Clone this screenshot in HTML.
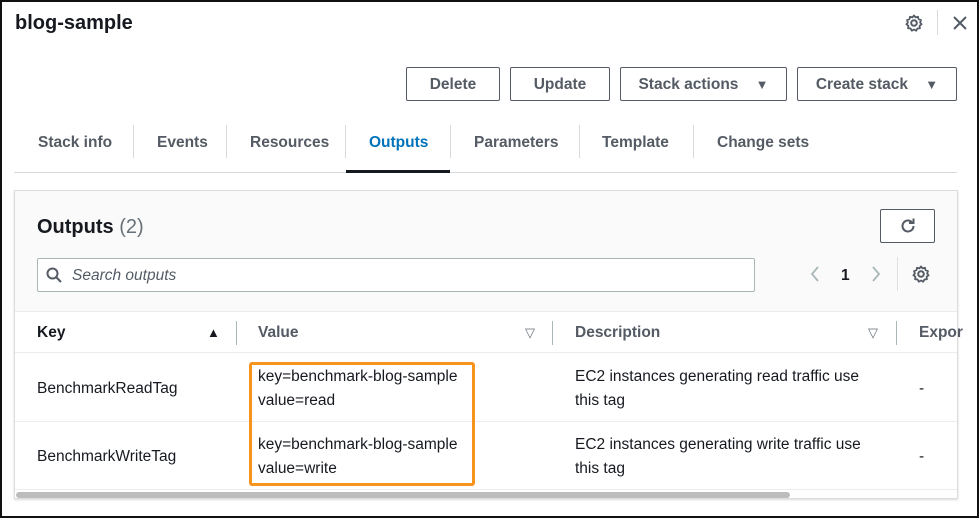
<!DOCTYPE html><html><head><style>
*{box-sizing:border-box;margin:0;padding:0}
body{width:979px;height:518px;overflow:hidden;background:#fff;font-family:"Liberation Sans",sans-serif;color:#16191f;position:relative}
.frame{position:absolute;left:0;top:0;width:979px;height:518px;border:2px solid #111}
.a{position:absolute;white-space:nowrap}
.btn{position:absolute;top:67px;height:34px;border:1px solid #545b64;border-radius:2px;font-weight:bold;font-size:15.5px;color:#545b64;display:flex;align-items:center;justify-content:center;background:#fff;padding-top:1px}
.tab{position:absolute;top:134px;font-size:15.5px;font-weight:bold;color:#545b64}
.sep{position:absolute;width:1px;background:#d5dbdb}
.td{position:absolute;font-size:15.5px;color:#16191f;line-height:24px}
.th{position:absolute;top:324px;font-size:15.5px;font-weight:bold;color:#545b64}
</style></head><body>
<div class="frame"></div>
<div class="a" style="left:15px;top:12px;font-size:20px;font-weight:bold">blog-sample</div>
<svg class="a" style="left:904px;top:13px" width="20" height="20" viewBox="0 0 20 20"><circle cx="10" cy="10" r="2.8" fill="none" stroke="#545b64" stroke-width="2"/><path d="M10 2.5l1.6 1.9 2.4-.6.6 2.4 2.4.9-.9 2.3 1.5 1.9-2 1.4.3 2.5-2.5.3-1.2 2.2-2.2-1.2-2.2 1.2-1.2-2.2-2.5-.3.3-2.5-2-1.4 1.5-1.9-.9-2.3 2.4-.9.6-2.4 2.4.6z" fill="none" stroke="#545b64" stroke-width="1.8" stroke-linejoin="round"/></svg>
<div class="sep" style="left:937px;top:10px;height:25px"></div>
<svg class="a" style="left:952px;top:15px" width="16" height="16" viewBox="0 0 16 16"><path d="M2 2L14 14M14 2L2 14" stroke="#545b64" stroke-width="2"/></svg>
<div class="btn" style="left:406px;width:94px">Delete</div>
<div class="btn" style="left:510px;width:100px">Update</div>
<div class="btn" style="left:620px;width:167px">Stack actions&nbsp;&nbsp;&nbsp;&nbsp;<span style="font-size:13px">▼</span></div>
<div class="btn" style="left:797px;width:160px">Create stack&nbsp;&nbsp;&nbsp;&nbsp;<span style="font-size:13px">▼</span></div>
<div class="tab" style="left:38px">Stack info</div>
<div class="sep" style="left:133px;top:125px;height:33px"></div>
<div class="tab" style="left:157px">Events</div>
<div class="sep" style="left:226px;top:125px;height:33px"></div>
<div class="tab" style="left:250px">Resources</div>
<div class="sep" style="left:345px;top:125px;height:33px"></div>
<div class="tab" style="left:369px;color:#0073bb">Outputs</div>
<div class="sep" style="left:450px;top:125px;height:33px"></div>
<div class="tab" style="left:474px">Parameters</div>
<div class="sep" style="left:579px;top:125px;height:33px"></div>
<div class="tab" style="left:602px">Template</div>
<div class="sep" style="left:693px;top:125px;height:33px"></div>
<div class="tab" style="left:717px">Change sets</div>
<div class="a" style="left:14px;top:172px;width:943px;height:1px;background:#d5dbdb"></div>
<div class="a" style="left:346px;top:170px;width:104px;height:3px;background:#16191f"></div>
<div class="a" style="left:14px;top:190px;width:944px;height:309px;background:#fafafa;border:1px solid #dcdcdc;box-shadow:0 1px 2px rgba(0,0,0,.15)"></div>
<div class="a" style="left:37px;top:216px;font-size:20px;font-weight:bold">Outputs <span style="font-weight:normal;color:#687078">(2)</span></div>
<div class="a" style="left:880px;top:209px;width:55px;height:34px;border:1px solid #545b64;border-radius:2px;background:#fff"></div>
<svg class="a" style="left:898px;top:216px" width="20" height="20" viewBox="0 0 20 20"><path d="M15.5 10a5.5 5.5 0 1 1-1.6-3.9" fill="none" stroke="#545b64" stroke-width="2"/><path d="M15.5 2.5v4.5h-4.5" fill="none" stroke="#545b64" stroke-width="2"/></svg>
<div class="a" style="left:37px;top:258px;width:718px;height:34px;border:1px solid #aab7b8;border-radius:2px;background:#fff"></div>
<svg class="a" style="left:46px;top:267px" width="16" height="16" viewBox="0 0 16 16"><circle cx="6.5" cy="6.5" r="5" fill="none" stroke="#545b64" stroke-width="2"/><path d="M10 10l5 5" stroke="#545b64" stroke-width="2"/></svg>
<div class="a" style="left:72px;top:267px;font-size:15.5px;font-style:italic;color:#545b64">Search outputs</div>
<svg class="a" style="left:809px;top:265px" width="12" height="18" viewBox="0 0 12 18"><path d="M9 2L3 9l6 7" fill="none" stroke="#aab7b8" stroke-width="1.8"/></svg>
<div class="a" style="left:841px;top:267px;font-size:15.5px;font-weight:bold">1</div>
<svg class="a" style="left:870px;top:265px" width="12" height="18" viewBox="0 0 12 18"><path d="M3 2l6 7-6 7" fill="none" stroke="#aab7b8" stroke-width="1.8"/></svg>
<div class="sep" style="left:897px;top:257px;height:34px;background:#e0e0e0"></div>
<svg class="a" style="left:911px;top:264px" width="20" height="20" viewBox="0 0 20 20"><circle cx="10" cy="10" r="2.8" fill="none" stroke="#545b64" stroke-width="2"/><path d="M10 2.5l1.6 1.9 2.4-.6.6 2.4 2.4.9-.9 2.3 1.5 1.9-2 1.4.3 2.5-2.5.3-1.2 2.2-2.2-1.2-2.2 1.2-1.2-2.2-2.5-.3.3-2.5-2-1.4 1.5-1.9-.9-2.3 2.4-.9.6-2.4 2.4.6z" fill="none" stroke="#545b64" stroke-width="1.8" stroke-linejoin="round"/></svg>
<div class="a" style="left:15px;top:311px;width:942px;height:187px;background:#fff;overflow:hidden"></div>
<div class="a" style="left:15px;top:311px;width:942px;height:1px;background:#eaeded"></div>
<div class="th" style="left:37px;color:#16191f">Key</div>
<div class="a" style="left:207px;top:325px;font-size:13px">▲</div>
<div class="sep" style="left:236px;top:321px;height:24px;background:#aab7b8"></div>
<div class="th" style="left:258px">Value</div>
<div class="a" style="left:525px;top:325px;font-size:13px;color:#687078">▽</div>
<div class="sep" style="left:552px;top:321px;height:24px;background:#aab7b8"></div>
<div class="th" style="left:575px">Description</div>
<div class="a" style="left:868px;top:325px;font-size:13px;color:#687078">▽</div>
<div class="sep" style="left:896px;top:321px;height:24px;background:#aab7b8"></div>
<div class="th" style="left:919px">Expor</div>
<div class="a" style="left:15px;top:352px;width:942px;height:1px;background:#eaeded"></div>
<div class="a" style="left:15px;top:421px;width:942px;height:1px;background:#eaeded"></div>
<div class="a" style="left:15px;top:489px;width:942px;height:1px;background:#eaeded"></div>
<div class="td" style="left:37px;top:377px">BenchmarkReadTag</div>
<div class="td" style="left:258px;top:365px">key=benchmark-blog-sample<br>value=read</div>
<div class="td" style="left:575px;top:365px">EC2 instances generating read traffic use<br>this tag</div>
<div class="td" style="left:919px;top:377px">-</div>
<div class="td" style="left:37px;top:445px">BenchmarkWriteTag</div>
<div class="td" style="left:258px;top:433px">key=benchmark-blog-sample<br>value=write</div>
<div class="td" style="left:575px;top:433px">EC2 instances generating write traffic use<br>this tag</div>
<div class="td" style="left:919px;top:445px">-</div>
<div class="a" style="left:249px;top:362px;width:226px;height:124px;border:3px solid #f7941d;border-radius:3px"></div>
<div class="a" style="left:16px;top:492px;width:774px;height:6px;background:#bdbdbd;border-radius:3px"></div>
</body></html>
